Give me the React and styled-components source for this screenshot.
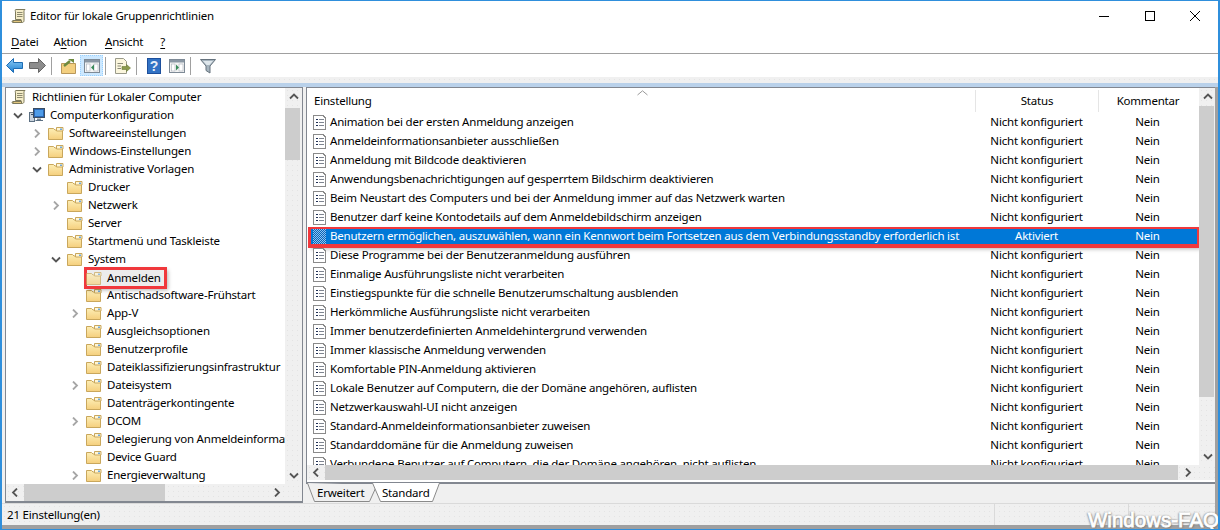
import React from 'react';
import styled, { createGlobalStyle } from 'styled-components';

const GlobalStyle = createGlobalStyle`
	html, body {
		margin: 0;
		padding: 0;
		background: #fff;
	}
	* {
		box-sizing: border-box;
	}
`;

const dotted = `
	background-color: #f0f0f0;
	background-image: radial-gradient(#e4e4e4 0.6px, transparent 0.7px);
	background-size: 5px 5px;
`;

const Window = styled.div`
	position: relative;
	width: 1220px;
	height: 530px;
	display: flex;
	flex-direction: column;
	overflow: hidden;
	border: 2px solid #2f8fdc;
	border-top-width: 1px;
	border-bottom-width: 1px;
	color: #000;
	font-family: 'Noto Sans', 'Liberation Sans', sans-serif;
	font-size: 11.5px;
	letter-spacing: -0.2px;
	background: #fff;
`;

// text sits a little high in its row, as it does with the Windows font
const Label = styled.span`
	padding-bottom: 2px;
`;

const TitleBar = styled.div`
	height: 30px;
	flex: none;
	display: flex;
	align-items: center;
	padding-left: 9px;
`;

const Title = styled(Label)`
	margin-left: 3px;
	flex: 1;
`;

const WinButton = styled.div`
	width: 45.5px;
	height: 30px;
	display: flex;
	align-items: center;
	justify-content: center;
`;

const MenuBar = styled.div`
	height: 23px;
	flex: none;
	display: flex;
	align-items: center;
	padding: 0 0 2px 9px;
	border-bottom: 1px solid #a0a0a0;
`;

const MenuItem = styled.span`
	margin-right: ${(props) => props.$gap}px;
	& u {
		text-underline-offset: 2px;
	}
`;

const Toolbar = styled.div`
	height: 23px;
	flex: none;
	display: flex;
	align-items: center;
	padding-left: 0.5px;
`;

const ToolButton = styled.div`
	width: 23px;
	height: 21px;
	display: flex;
	align-items: center;
	justify-content: center;
	margin-left: ${(props) => (props.$active ? '0.5px' : '0')};
	background: ${(props) => (props.$active ? '#cce8ff' : 'transparent')};
	border: 1px ${(props) => (props.$active ? 'dotted #99d1ff' : 'solid transparent')};
`;

const ToolSep = styled.div`
	width: 1px;
	height: 18px;
	margin: 0 5px 0 2px;
	background: #a0a0a0;
`;

const BlueStrip = styled.div`
	height: 10px;
	flex: none;
	${dotted}
	border-bottom: 4px solid #b9d1ea;
`;

const Panes = styled.div`
	flex: 1;
	min-height: 0;
	display: flex;
	gap: 3px;
	padding: 0 1px 0 3px;
	background: #f0f0f0;
`;

const TreePane = styled.div`
	width: 298px;
	height: 416px;
	flex: none;
	display: flex;
	flex-direction: column;
	border: 1px solid #828790;
	border-bottom-width: 2px;
	background: #fff;
`;

const PaneBody = styled.div`
	flex: 1;
	min-height: 0;
	display: flex;
`;

const TreeList = styled.div`
	flex: 1;
	min-width: 0;
	overflow: hidden;
`;

const TreeRow = styled.div`
	height: 18px;
	display: flex;
	align-items: center;
	white-space: nowrap;
	padding-left: ${(props) => (props.$level === 0 ? 5 : 7 + 19 * (props.$level - 1))}px;
`;

const ChevronSlot = styled.div`
	width: 16px;
	flex: none;
	display: flex;
	align-items: center;
`;

const TreeItem = styled.div`
	display: flex;
	align-items: center;
	gap: 5px;
	${(props) =>
		props.$marked &&
		`
		margin-left: -1px;
		padding: 0 5px 0 1px;
		height: 20px;
		margin-top: 2px;
		background: #ececec;
		box-shadow: inset 0 0 0 2px #f0383c, 0 0 0 1px #f0383c, 2px 2px 4px rgba(0, 0, 0, 0.3);
		position: relative;
	`}
`;

const VScroll = styled.div`
	width: ${(props) => props.$width}px;
	flex: none;
	display: flex;
	flex-direction: column;
	align-items: flex-start;
	${dotted}
`;

const ScrollArrow = styled.div`
	height: 17px;
	width: ${(props) => props.$width || 17}px;
	flex: none;
	display: flex;
	align-items: center;
	justify-content: center;
`;

const VThumb = styled.div`
	width: ${(props) => props.$width}px;
	height: ${(props) => props.$height}px;
	margin-top: ${(props) => props.$top}px;
	background: #cdcdcd;
`;

const VSpacer = styled.div`
	flex: 1;
`;

const HScroll = styled.div`
	height: ${(props) => props.$height}px;
	flex: none;
	display: flex;
	align-items: center;
	${dotted}
`;

const HThumb = styled.div`
	width: ${(props) => props.$width}px;
	height: 100%;
	background: #cdcdcd;
`;

const RightColumn = styled.div`
	flex: 1;
	min-width: 0;
	display: flex;
	flex-direction: column;
`;

const ListPane = styled.div`
	height: 397px;
	flex: none;
	display: flex;
	flex-direction: column;
	border: 1px solid #828790;
	border-bottom-width: 2px;
	background: #fff;
`;

const ListArea = styled.div`
	flex: 1;
	min-width: 0;
	overflow: hidden;
	padding-left: 2px;
`;

const Columns = styled.div`
	display: grid;
	grid-template-columns: 666px 123px 99px;
	align-items: center;
	white-space: nowrap;
	height: ${(props) => props.$height}px;
`;

const Header = styled(Columns)`
	position: relative;
	margin-top: 2px;
	margin-bottom: 1px;
`;

const SortCaret = styled.div`
	position: absolute;
	left: 328px;
	top: 0;
	display: flex;
`;

const HeaderCell = styled.div`
	height: 100%;
	display: flex;
	align-items: center;
	justify-content: ${(props) => (props.$start ? 'flex-start' : 'center')};
	padding-left: ${(props) => (props.$start ? '5px' : '0')};
	border-left: ${(props) => (props.$start ? 'none' : '1px solid #e5e5e5')};
`;

const Row = styled(Columns)`
	position: relative;
	color: ${(props) => (props.$selected ? '#fff' : '#000')};
	background: ${(props) => (props.$selected ? '#0078d7' : 'transparent')};
	box-shadow: ${(props) =>
		props.$selected
			? 'inset 0 0 0 2px #f0383c, 0 1px 0 1px #f0383c, 2px 3px 4px rgba(0, 0, 0, 0.3)'
			: 'none'};
`;

const NameCell = styled.div`
	display: flex;
	align-items: center;
	gap: 4px;
	padding-left: 4px;
`;

const ValueCell = styled.div`
	text-align: center;
	padding-bottom: 2px;
`;

const ListScroll = styled(HScroll)`
	margin-bottom: 2px;
`;

const HCorner = styled.div`
	flex: ${(props) => (props.$width ? 'none' : 1)};
	width: ${(props) => (props.$width ? `${props.$width}px` : 'auto')};
`;

const TabStrip = styled.div`
	height: 19px;
	margin-top: -1px;
	flex: none;
	display: flex;
	padding-left: 1px;
`;

const Tab = styled.div`
	position: relative;
	width: ${(props) => props.$width}px;
	height: 20px;
	padding-left: ${(props) => props.$pad}px;
	display: flex;
	align-items: center;
	& svg {
		position: absolute;
		left: 0;
		top: 0;
	}
	& span {
		position: relative;
	}
`;

const StatusBar = styled.div`
	height: 22px;
	flex: none;
	display: flex;
	align-items: center;
	${dotted}
	border-top: 1px solid #dadada;
	padding-left: 5px;
`;

const StatusText = styled.div`
	width: 987px;
	flex: none;
`;

const StatusCell = styled.div`
	width: ${(props) => props.$width}px;
	height: 100%;
	flex: none;
	border-left: 1px solid #dadada;
`;

const BottomEdge = styled.div`
	height: 4px;
	flex: none;
	background: #a0a0a0;
`;

const RightEdge = styled.div`
	position: absolute;
	right: 0;
	top: 86px;
	bottom: 0;
	width: 3px;
	background: #a0a0a0;
`;

const Watermark = styled.div`
	position: absolute;
	right: -1px;
	bottom: 1px;
	font-family: 'Liberation Sans', Arial, sans-serif;
	font-size: 20.5px;
	line-height: 16px;
	letter-spacing: 0;
	color: #fff;
	-webkit-text-stroke: 0.8px #fff;
	text-shadow: 0 0 2px #777, 1px 1px 2px #777, -1px 0 2px #999;
`;

// --- drawings ---

const MinIcon = () => (
	<svg width='10' height='10'>
		<path d='M0 5.5H10' stroke='#000' />
	</svg>
);

const MaxIcon = () => (
	<svg width='10' height='10'>
		<rect x='0.5' y='0.5' width='9' height='9' fill='none' stroke='#000' />
	</svg>
);

const CloseIcon = () => (
	<svg width='10' height='10'>
		<path d='M0 0L10 10M10 0L0 10' stroke='#000' />
	</svg>
);

const ScrollIcon = () => (
	<svg width='16' height='16' style={{ flex: 'none' }}>
		<path
			d='M5 1.5H14C12.6 2.5 13 3.5 13 5V12.5C13 14 12 14.5 11 14.5H2C1 14.5 .6 13 2 12.5H10V11.5H4.5V4C4.5 3 3.6 1.5 5 1.5Z'
			fill='#f5edc8'
			stroke='#7e7a5c'
		/>
		<path d='M6 4.5H11.5M6 6.5H11.5M6 8.5H11.5' stroke='#8d8a70' />
		<path d='M2 12.5H10.5V14.5H2Z' fill='#e3c77e' stroke='#7e7a5c' />
	</svg>
);

const ComputerIcon = () => (
	<svg width='16' height='16' style={{ flex: 'none' }}>
		<rect x='0.5' y='5.5' width='5' height='9' fill='#c8d2dc' stroke='#5b6f82' />
		<rect x='4.5' y='1.5' width='11' height='9' fill='#2a66b4' stroke='#3c4e62' />
		<rect x='6' y='3' width='8' height='6' fill='#4f9ce8' />
		<path d='M8 11.5H12V13H8Z' fill='#7d8a96' />
		<path d='M6.5 13.5H14' stroke='#5b6f82' />
		<path d='M2 7.5H4' stroke='#39506a' />
	</svg>
);

const FolderIcon = ({ dim }) => (
	<svg width='16' height='14' style={{ flex: 'none', opacity: dim ? 0.72 : 1 }}>
		<defs>
			<linearGradient id='folderFill' x1='0' y1='0' x2='0' y2='1'>
				<stop offset='0' stopColor='#fdeeb5' />
				<stop offset='1' stopColor='#f5cf7d' />
			</linearGradient>
		</defs>
		<path d='M0.5 2.5H5.5L7 4H14.5V13.5H0.5Z' fill='url(#folderFill)' stroke='#c9a75c' />
		<path d='M8.5 1.5H15V5H8.5Z' fill='#fff6d6' stroke='#c9a75c' />
		<path d='M12 2.5H14V4H12Z' fill='#6fa9dc' />
	</svg>
);

const ditherCells = Array.from({ length: 13 * 15 }, (_, i) => ({ x: i % 13, y: Math.floor(i / 13) }));

const DocIcon = ({ selected }) => (
	<svg width='13' height='15' style={{ flex: 'none' }} shapeRendering='crispEdges'>
		{selected ? (
			<>
				<rect width='13' height='15' fill='#0a62b8' />
				{ditherCells
					.filter((cell) => (cell.x + cell.y) % 2 === 0)
					.map((cell) => (
						<rect key={`${cell.x}-${cell.y}`} x={cell.x} y={cell.y} width='1' height='1' fill='#8cc6f2' />
					))}
			</>
		) : (
			<>
				<path d='M0.5 0.5H10L12.5 3V14.5H0.5Z' fill='#fff' stroke='#8a8a8a' />
				<path d='M3 4.5H4.5M3 7.5H4.5M3 10.5H4.5' stroke='#1f2f55' />
				<path d='M6 4.5H10.5M6 7.5H10.5M6 10.5H10.5' stroke='#7f8590' />
			</>
		)}
	</svg>
);

const Chevron = ({ dir, color = '#a6a6a6' }) => {
	const paths = {
		down: 'M1 2.5L5 6.5L9 2.5',
		right: 'M3 0.5L7 4.5L3 8.5',
		up: 'M1 6.5L5 2.5L9 6.5',
		left: 'M7 0.5L3 4.5L7 8.5',
	};
	return (
		<svg width='10' height='9' style={{ flex: 'none' }}>
			<path d={paths[dir]} fill='none' stroke={color} strokeWidth='1.8' />
		</svg>
	);
};

const ArrowLeft = () => (
	<svg width='17' height='15'>
		<defs>
			<linearGradient id='blueArrow' x1='0' y1='0' x2='0' y2='1'>
				<stop offset='0' stopColor='#8fcdf6' />
				<stop offset='1' stopColor='#1c7fd0' />
			</linearGradient>
		</defs>
		<path d='M0.5 7.5L7.5 0.5V4.5H16.5V10.5H7.5V14.5Z' fill='url(#blueArrow)' stroke='#1d6cb4' />
	</svg>
);

const ArrowRight = () => (
	<svg width='17' height='15'>
		<path d='M16.5 7.5L9.5 0.5V4.5H0.5V10.5H9.5V14.5Z' fill='#8d8d8d' stroke='#666' />
	</svg>
);

const UpFolderIcon = () => (
	<svg width='15' height='16'>
		<path d='M0.5 5.5H14.5V15.5H0.5Z' fill='#f3cf7f' stroke='#b9975a' />
		<path d='M3 8L9 3' stroke='#6e8a3e' strokeWidth='2.4' />
		<path d='M7 1H13V5Z' fill='#6e8a3e' />
	</svg>
);

const PaneIcon = ({ arrow = '#3a8a5a', right }) => (
	<svg width='16' height='14'>
		<rect x='0.5' y='0.5' width='15' height='13' fill='#f4f4f4' stroke='#7e8a96' />
		<rect x='1' y='1' width='14' height='2.5' fill='#8a97a4' />
		<rect x='2.5' y='5' width='3.5' height='7' fill='#fff' stroke='#a8b0b8' strokeWidth='0.6' />
		<rect x='10' y='5' width='4' height='7' fill='#fff' stroke='#a8b0b8' strokeWidth='0.6' />
		<path d={right ? 'M7 5.5L10 8.5L7 11.5Z' : 'M10 5.5L7 8.5L10 11.5Z'} fill={arrow} />
	</svg>
);

const ExportIcon = () => (
	<svg width='16' height='16'>
		<path d='M0.5 0.5H8.5L11.5 3.5V15.5H0.5Z' fill='#fbf6dd' stroke='#9a9a8a' />
		<path d='M2.5 5.5H8M2.5 8H6M2.5 10.5H6' stroke='#8a8a7a' />
		<path d='M7 8.5H11.5V6.5L15.5 10L11.5 13.5V11.5H7Z' fill='#8b9a4c' stroke='#6b7838' strokeWidth='0.6' />
	</svg>
);

const HelpIcon = () => (
	<svg width='14' height='16'>
		<rect width='14' height='16' fill='#1d4f9c' />
		<rect x='1' y='1' width='12' height='14' fill='#3272c4' />
		<text x='7' y='13' textAnchor='middle' fontFamily='Liberation Sans' fontWeight='700' fontSize='14' fill='#e6eef8'>
			?
		</text>
	</svg>
);

const FilterIcon = () => (
	<svg width='16' height='16'>
		<path d='M0.5 1.5H15.5L10 8V15L6 12.5V8Z' fill='#a6b4be' stroke='#66737e' />
		<path d='M3 3H13L9.5 7H6.5Z' fill='#dfe7ec' />
	</svg>
);

const SmallCaret = () => (
	<svg width='11' height='6'>
		<path d='M0.5 5L5.5 0.8L10.5 5' fill='none' stroke='#9a9a9a' />
	</svg>
);

// --- data ---

const treeRows = [
	{ level: 1, open: true, text: 'Computerkonfiguration', icon: 'computer' },
	{ level: 2, closed: true, text: 'Softwareeinstellungen' },
	{ level: 2, closed: true, text: 'Windows-Einstellungen' },
	{ level: 2, open: true, text: 'Administrative Vorlagen' },
	{ level: 3, text: 'Drucker' },
	{ level: 3, closed: true, text: 'Netzwerk' },
	{ level: 3, text: 'Server' },
	{ level: 3, text: 'Startmenü und Taskleiste' },
	{ level: 3, open: true, text: 'System' },
	{ level: 4, text: 'Anmelden', marked: true },
	{ level: 4, text: 'Antischadsoftware-Frühstart' },
	{ level: 4, closed: true, text: 'App-V' },
	{ level: 4, text: 'Ausgleichsoptionen' },
	{ level: 4, text: 'Benutzerprofile' },
	{ level: 4, text: 'Dateiklassifizierungsinfrastruktur' },
	{ level: 4, closed: true, text: 'Dateisystem' },
	{ level: 4, text: 'Datenträgerkontingente' },
	{ level: 4, closed: true, text: 'DCOM' },
	{ level: 4, text: 'Delegierung von Anmeldeinformationen' },
	{ level: 4, text: 'Device Guard' },
	{ level: 4, closed: true, text: 'Energieverwaltung' },
];

const settings = [
	'Animation bei der ersten Anmeldung anzeigen',
	'Anmeldeinformationsanbieter ausschließen',
	'Anmeldung mit Bildcode deaktivieren',
	'Anwendungsbenachrichtigungen auf gesperrtem Bildschirm deaktivieren',
	'Beim Neustart des Computers und bei der Anmeldung immer auf das Netzwerk warten',
	'Benutzer darf keine Kontodetails auf dem Anmeldebildschirm anzeigen',
	'Benutzern ermöglichen, auszuwählen, wann ein Kennwort beim Fortsetzen aus dem Verbindungsstandby erforderlich ist',
	'Diese Programme bei der Benutzeranmeldung ausführen',
	'Einmalige Ausführungsliste nicht verarbeiten',
	'Einstiegspunkte für die schnelle Benutzerumschaltung ausblenden',
	'Herkömmliche Ausführungsliste nicht verarbeiten',
	'Immer benutzerdefinierten Anmeldehintergrund verwenden',
	'Immer klassische Anmeldung verwenden',
	'Komfortable PIN-Anmeldung aktivieren',
	'Lokale Benutzer auf Computern, die der Domäne angehören, auflisten',
	'Netzwerkauswahl-UI nicht anzeigen',
	'Standard-Anmeldeinformationsanbieter zuweisen',
	'Standarddomäne für die Anmeldung zuweisen',
	'Verbundene Benutzer auf Computern, die der Domäne angehören, nicht auflisten',
];

const App = () => {
	return (
		<>
			<GlobalStyle />
			<Window>
				<TitleBar>
					<ScrollIcon />
					<Title>Editor für lokale Gruppenrichtlinien</Title>
					<WinButton>
						<MinIcon />
					</WinButton>
					<WinButton>
						<MaxIcon />
					</WinButton>
					<WinButton>
						<CloseIcon />
					</WinButton>
				</TitleBar>
				<MenuBar>
					<MenuItem $gap={15}>
						<u>D</u>atei
					</MenuItem>
					<MenuItem $gap={18}>
						A<u>k</u>tion
					</MenuItem>
					<MenuItem $gap={17}>
						<u>A</u>nsicht
					</MenuItem>
					<MenuItem $gap={0}>
						<u>?</u>
					</MenuItem>
				</MenuBar>
				<Toolbar>
					<ToolButton>
						<ArrowLeft />
					</ToolButton>
					<ToolButton>
						<ArrowRight />
					</ToolButton>
					<ToolSep />
					<ToolButton>
						<UpFolderIcon />
					</ToolButton>
					<ToolButton $active>
						<PaneIcon />
					</ToolButton>
					<ToolSep />
					<ToolButton>
						<ExportIcon />
					</ToolButton>
					<ToolSep />
					<ToolButton>
						<HelpIcon />
					</ToolButton>
					<ToolButton>
						<PaneIcon right />
					</ToolButton>
					<ToolSep />
					<ToolButton>
						<FilterIcon />
					</ToolButton>
				</Toolbar>
				<BlueStrip />
				<Panes>
					<TreePane>
						<PaneBody>
							<TreeList>
								<TreeRow $level={0}>
									<TreeItem>
										<ScrollIcon />
										<Label>Richtlinien für Lokaler Computer</Label>
									</TreeItem>
								</TreeRow>
								{treeRows.map((row) => (
									<TreeRow key={row.text} $level={row.level}>
										<ChevronSlot>
											{row.open && <Chevron dir='down' color='#555' />}
											{row.closed && <Chevron dir='right' />}
										</ChevronSlot>
										<TreeItem $marked={row.marked}>
											{row.icon === 'computer' ? <ComputerIcon /> : <FolderIcon dim={row.marked} />}
											<Label>{row.text}</Label>
										</TreeItem>
									</TreeRow>
								))}
							</TreeList>
							<VScroll $width={17}>
								<ScrollArrow>
									<Chevron dir='up' color='#555' />
								</ScrollArrow>
								<VThumb $width={15} $height={52} $top={3} />
								<VSpacer />
								<ScrollArrow>
									<Chevron dir='down' color='#555' />
								</ScrollArrow>
							</VScroll>
						</PaneBody>
						<HScroll $height={17}>
							<ScrollArrow $width={18}>
								<Chevron dir='left' color='#555' />
							</ScrollArrow>
							<HThumb $width={141} />
							<HCorner />
							<ScrollArrow>
								<Chevron dir='right' color='#555' />
							</ScrollArrow>
							<HCorner $width={17} />
						</HScroll>
					</TreePane>
					<RightColumn>
						<ListPane>
							<PaneBody>
								<ListArea>
									<Header $height={22}>
										<HeaderCell $start>
											<Label>Einstellung</Label>
										</HeaderCell>
										<HeaderCell>
											<Label>Status</Label>
										</HeaderCell>
										<HeaderCell>
											<Label>Kommentar</Label>
										</HeaderCell>
										<SortCaret>
											<SmallCaret />
										</SortCaret>
									</Header>
									{settings.map((name, index) => (
										<Row key={name} $height={19} $selected={index === 6}>
											<NameCell>
												<DocIcon selected={index === 6} />
												<Label>{name}</Label>
											</NameCell>
											<ValueCell>{index === 6 ? 'Aktiviert' : 'Nicht konfiguriert'}</ValueCell>
											<ValueCell>Nein</ValueCell>
										</Row>
									))}
								</ListArea>
								<VScroll $width={17}>
									<ScrollArrow>
										<Chevron dir='up' color='#555' />
									</ScrollArrow>
									<VThumb $width={15} $height={291} $top={1} />
									<VSpacer />
									<ScrollArrow>
										<Chevron dir='down' color='#555' />
									</ScrollArrow>
								</VScroll>
							</PaneBody>
							<ListScroll $height={15}>
								<ScrollArrow $width={18}>
									<Chevron dir='left' color='#555' />
								</ScrollArrow>
								<HThumb $width={853} />
								<ScrollArrow $width={19}>
									<Chevron dir='right' color='#555' />
								</ScrollArrow>
								<HCorner />
							</ListScroll>
						</ListPane>
						<TabStrip>
							<Tab $width={65} $pad={10}>
								<svg width='72' height='20'>
									<path d='M0.5 0L7.5 18.5H62.5L70 2' fill='#f0f0f0' stroke='#8a8a8a' />
								</svg>
								<Label>Erweitert</Label>
							</Tab>
							<Tab $width={68} $pad={10}>
								<svg width='68' height='20'>
									<path d='M0.5 0L8.5 18.5H60.5L67.5 0' fill='#fff' stroke='#8a8a8a' />
								</svg>
								<Label>Standard</Label>
							</Tab>
						</TabStrip>
					</RightColumn>
				</Panes>
				<StatusBar>
					<StatusText>
						<Label>21 Einstellung(en)</Label>
					</StatusText>
					<StatusCell $width={134} />
					<StatusCell $width={60} />
				</StatusBar>
				<BottomEdge />
				<RightEdge />
				<Watermark>Windows-FAQ</Watermark>
			</Window>
		</>
	);
};

export default App;
